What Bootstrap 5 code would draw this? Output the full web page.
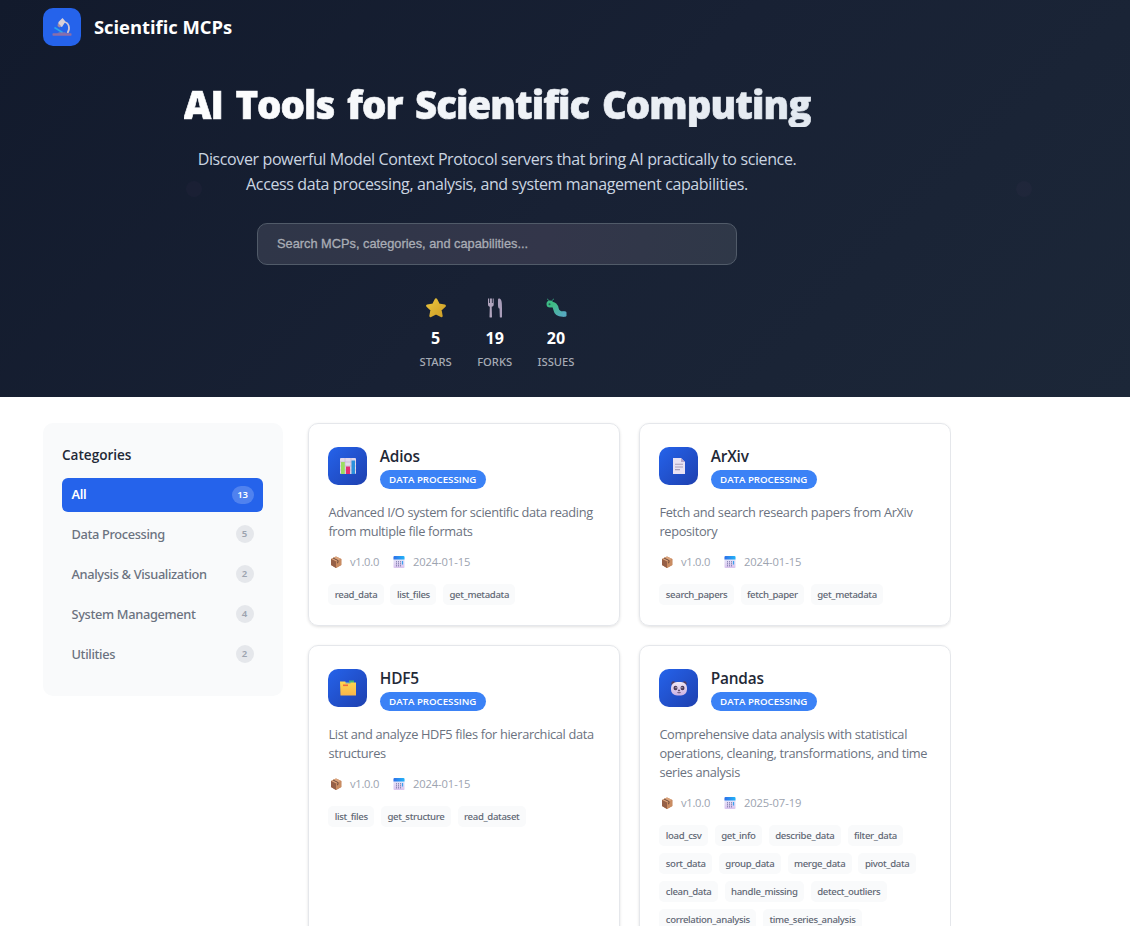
<!DOCTYPE html>
<html lang="en">
<head>
<meta charset="utf-8">
<meta name="viewport" content="width=device-width, initial-scale=1">
<title>Scientific MCPs</title>
<link href="https://cdn.jsdelivr.net/npm/bootstrap@5.3.0/dist/css/bootstrap.min.css" rel="stylesheet">
<style>
body{font-family:"Open Sans","Noto Sans",sans-serif;background:#fff;color:#1f2937;height:926px;overflow:hidden}
.wrap{width:908px;margin-left:43px}
.hero{height:397px;background:linear-gradient(135deg,#121a2c 0%,#182134 50%,#1c2738 100%);color:#fff;position:relative}
.hero .dot{position:absolute;width:16px;height:16px;border-radius:50%;background:rgba(99,70,120,.07);top:181px}
.topbar{height:54px;gap:13px}
.logo{width:38px;height:38px;border-radius:10px;background:#2563eb}
.brand{font-size:18.4px;font-weight:700;letter-spacing:-.03px}
h1{font-size:38.4px;font-weight:800;line-height:46px;margin:27px 0 0;letter-spacing:-.97px;word-spacing:3.6px;white-space:nowrap;background:linear-gradient(135deg,#fff,#e2e8f0);-webkit-background-clip:text;background-clip:text;color:transparent;-webkit-text-stroke:.7px transparent}
.intro{font-size:16px;line-height:25.4px;margin:20px 0 0;color:#cbd5e1;letter-spacing:-.38px;white-space:nowrap}
.search{width:480px;height:42px;margin-top:25px;border:1px solid #515b69;border-radius:10px;background:linear-gradient(100deg,#2f3648,#33364a 60%,#2f3848);padding:0 19px;font:500 12.8px/40px "Liberation Sans",sans-serif;color:#a9adb5;-webkit-text-stroke:.3px}
.search::placeholder{color:#a9adb5;opacity:1}
.search:focus{outline:0}
.stats{gap:25.4px;margin-top:32px}
.stats svg{width:22px;height:22px}
.stats b{font-size:16px;line-height:20px;margin-top:9px;font-weight:700;letter-spacing:0}
.stats span{font-family:"Noto Sans","Open Sans",sans-serif;font-size:11.2px;line-height:15px;margin-top:6px;color:#a6abb5;font-weight:500}
.main{padding-top:26px;gap:25px;height:529px;overflow:hidden}
.side{width:240px;height:273px;border-radius:10px;background:#f9fafb;padding:22px 20px 0 19px}
.side h2{font-size:13.6px;font-weight:600;line-height:20px;margin:0 0 13px;letter-spacing:-.02px}
.cat{height:34px;margin-bottom:5.8px;border-radius:6px;padding:0 9.5px;font-family:"Noto Sans","Open Sans",sans-serif;font-size:12.8px;font-weight:500;color:#6b7280;letter-spacing:-.34px}
.cat i{font-style:normal;font-size:9.6px;line-height:18px;height:18px;border-radius:9px;padding:0 5.4px;min-width:18px;text-align:center;background:#e5e7eb;color:#9ca3af;font-weight:600;letter-spacing:0;margin-top:-1px}
.cat.on{background:#2563eb;color:#fff;font-weight:600}
.cat.on i{background:rgba(255,255,255,.2);color:#fff}
.tiles{display:grid;grid-template-columns:312px 312px;gap:19px;grid-template-rows:203px 340px}
.tile{border:1px solid #e5e7eb;border-radius:10px;padding:23px 19px 0 19.4px;box-shadow:0 1px 3px rgba(0,0,0,.12)}
.glyph{width:38.4px;height:38px;border-radius:10px;background:linear-gradient(135deg,#2563eb,#1e40af)}
.glyph svg,.logo svg{width:20px;height:20px}
.tile .head{gap:13px}
.tile h3{font-size:15.4px;font-weight:600;line-height:19px;margin:0;letter-spacing:-.2px}
.pill{font-size:9.7px;font-weight:600;line-height:19px;height:19px;border-radius:10px;background:#3b82f6;color:#fff;padding:0 9.3px;margin-top:4px;letter-spacing:-.02px;width:max-content}
.tile p{font-size:12.8px;line-height:19.1px;margin:14px 0 0;color:#6b7280;letter-spacing:-.33px;white-space:nowrap}
.meta{font-size:11.2px;line-height:16px;margin-top:13px;color:#9ca3af;letter-spacing:-.1px}
.meta svg{width:14px;height:14px;margin-left:1px}
.meta .ver{margin:0 12.700px 0 6.500px;width:28.5px;white-space:nowrap;letter-spacing:-.25px}
.meta .date{margin-left:6.800px}
.tags{gap:6.8px;margin-top:13.600px}
.tags span{font-family:"Noto Sans","Open Sans",sans-serif;font-size:9.6px;line-height:21px;height:21.2px;padding:0 6.4px;border-radius:5px;background:#f9fafb;color:#5f6774;font-weight:500;letter-spacing:-.34px}
</style>
</head>
<body>
<svg width="0" height="0" class="position-absolute">
<defs>
<linearGradient id="gold" x2="1" y2="1"><stop stop-color="#e9c33c"/><stop offset="1" stop-color="#cf9f27"/></linearGradient>
<linearGradient id="worm" x2="1" y2="1"><stop stop-color="#3fbf80"/><stop offset="1" stop-color="#55a9bd"/></linearGradient>
<linearGradient id="folder" x2="0" y2="1"><stop stop-color="#ffd84f"/><stop offset="1" stop-color="#f9b54c"/></linearGradient>
<linearGradient id="sheet" x2="0" y2="1"><stop stop-color="#e8eefc"/><stop offset="1" stop-color="#d9c3ee"/></linearGradient>
<linearGradient id="calhead"><stop stop-color="#2f6fe8"/><stop offset="1" stop-color="#22b4f8"/></linearGradient>
<linearGradient id="face" x2="0" y2="1"><stop stop-color="#f1e8f3"/><stop offset="1" stop-color="#cbb0e2"/></linearGradient>
</defs>
<symbol id="scope" viewBox="0 0 20 20"><path d="M12 5c5 .5 6.500 6.500 3.500 11" fill="none" stroke="#d3c6d3" stroke-width="1.700"/><path d="M6.500 5l4-4 3 3.500-3.500 5.500-4-1.500z" fill="#d8cfd8"/><path d="M6 6l3 3-1.500 1.500L5.500 9z" fill="#a58b9f"/><path d="M2.500 10.500l8 5" stroke="#2aa5ee" stroke-width="1.600"/><path d="M7 15.500h6l2 1H5z" fill="#98849f"/><rect x=".5" y="16.300" width="19" height="2.400" rx=".6" fill="#8c6ea9"/></symbol>
<symbol id="star" viewBox="0 0 22 22"><path d="M11 2.600l2.700 5.200 5.900.9-4.300 4.200 1.100 6-5.400-2.800-5.400 2.800 1.100-6-4.300-4.200 5.900-.9z" fill="url(#gold)" stroke="url(#gold)" stroke-width="2.600" stroke-linejoin="round"/></symbol>
<symbol id="fork" viewBox="0 0 22 22"><path d="M4 1.500v6c0 1.500.8 2 1.800 2.300L5.500 20c0 .8 2.500.8 2.500 0L7.700 9.800C9 9.500 9.700 9 9.700 7.500v-6h-1v4.500h-.8v-4.500H5.800v4.500h-.8v-4.500z" fill="#b0a4bd"/><path d="M14 3c0-1.500 1-1.800 2-1.300 1.800 1 2 4 2 9.300V20c0 .8-2.200.8-2.200 0l-.3-8.500c-1.500 0-1.600-2-1.500-8.500z" fill="#a99db9"/></symbol>
<symbol id="bug" viewBox="0 0 22 22"><path d="M4.500 4L2 1.800M6.500 4L9 1.800" stroke="#348e75" fill="none" stroke-width="1"/><path d="M5.500 7.500c4.500-.5 5 2 5.500 4.500s2.500 5.500 8 5" fill="none" stroke="url(#worm)" stroke-width="5.600"/><rect x="17.500" y="14.200" width="4" height="5.600" rx="1.500" fill="#55a9bd"/><circle cx="5" cy="7" r="3.500" fill="#3dbb85"/><circle cx="4.500" cy="7.200" r="1" fill="#235b52"/></symbol>
<symbol id="chart" viewBox="0 0 20 20"><rect x="2" y="2" width="16" height="16" rx="1" fill="#e1d8ec"/><path d="M2 6h16M2 10h16M2 14h16M7 2v16M13 2v16" stroke="#bdb0d2" stroke-width=".6"/><path d="M3 6h3.800v12H3z" fill="#9bdc62"/><path d="M8 10.500h4V18H8z" fill="#e52d72"/><path d="M13.500 4.500H17V18h-3.500z" fill="#2b91dc"/></symbol>
<symbol id="doc" viewBox="0 0 20 20"><path d="M4 2h8l4 4v12H4z" fill="#e9e2f3"/><path d="M12 2v4h4z" fill="#b8a6c9"/><path d="M6 8.300h8M6 11h8M6 13.600h5" stroke="#aaa0b9" stroke-width="1.100"/></symbol>
<symbol id="files" viewBox="0 0 20 20"><path d="M11 2.500h5v3h-5z" fill="#43b577"/><path d="M2 3.500h5l1.500 1H18v13H2.500z" fill="url(#folder)"/><path d="M7.500 4.300h5v1h-5z" fill="#3b8be1"/><path d="M5 6.500h5v1.600H5z" fill="#f06a3f"/></symbol>
<symbol id="panda" viewBox="0 0 20 20"><circle cx="4.500" cy="5.500" r="2.200" fill="#554065"/><circle cx="15.500" cy="5.500" r="2.200" fill="#554065"/><rect x="2" y="4" width="16" height="13.500" rx="6" fill="url(#face)"/><ellipse cx="6.500" cy="10" rx="2" ry="2.300" fill="#4c3b5a"/><ellipse cx="13.500" cy="10" rx="2" ry="2.300" fill="#4c3b5a"/><circle cx="7" cy="9.700" r=".6" fill="#ddd"/><circle cx="13" cy="9.700" r=".6" fill="#ddd"/><path d="M9 12h2l-1 1.300zM8.200 14.500q1.800 1 3.600 0" fill="#4c3b5a" stroke="#4c3b5a" stroke-width=".5"/></symbol>
<symbol id="box" viewBox="0 0 14 14"><path d="M2 4l5-2.500L12.300 4v6L7 13 2 10z" fill="#b97a50"/><path d="M2 4l5-2.500L12.300 4 7 6.500z" fill="#dca47c"/><path d="M7 6.500L12.300 4v6L7 13z" fill="#c98c62"/><path d="M2 4l5 2.500V13L2 10z" fill="#966047"/><path d="M4 3l5 2.500v2L8 8" stroke="#6d4a3d" stroke-width="1" fill="none"/></symbol>
<symbol id="cal" viewBox="0 0 14 14"><rect x="1.500" y="1.500" width="11" height="11.500" rx="1" fill="url(#sheet)"/><path d="M1.500 4.500V2q0-1 1-1h9q1 0 1 1v2.500z" fill="url(#calhead)"/><path d="M4.500 6v6M6.500 6v6M8.500 6v6" stroke="#918bb8" stroke-width="1" stroke-dasharray="1.500 .5"/><path d="M10.500 6v3.500" stroke="#3aa1ef" stroke-width="1.200"/></symbol>
</svg>

<header class="hero">
  <span class="dot" style="left:186px"></span><span class="dot" style="left:1016px"></span>
  <div class="wrap">
    <div class="topbar d-flex align-items-center">
      <div class="logo d-flex align-items-center justify-content-center"><svg><use href="#scope"/></svg></div>
      <div class="brand">Scientific MCPs</div>
    </div>
    <div class="d-flex flex-column align-items-center text-center">
      <h1>AI Tools for Scientific Computing</h1>
      <p class="intro">Discover powerful Model Context Protocol servers that bring AI practically to science.<br>Access data processing, analysis, and system management capabilities.</p>
      <input class="search" type="text" placeholder="Search MCPs, categories, and capabilities..." aria-label="Search">
      <div class="stats d-flex">
        <div class="d-flex flex-column align-items-center"><svg><use href="#star"/></svg><b>5</b><span>STARS</span></div>
        <div class="d-flex flex-column align-items-center"><svg><use href="#fork"/></svg><b>19</b><span>FORKS</span></div>
        <div class="d-flex flex-column align-items-center"><svg><use href="#bug"/></svg><b>20</b><span>ISSUES</span></div>
      </div>
    </div>
  </div>
</header>

<main class="wrap main d-flex align-items-start">
  <aside class="side flex-shrink-0">
    <h2>Categories</h2>
    <div class="cat on d-flex align-items-center justify-content-between">All<i>13</i></div>
    <div class="cat d-flex align-items-center justify-content-between">Data Processing<i>5</i></div>
    <div class="cat d-flex align-items-center justify-content-between">Analysis &amp; Visualization<i>2</i></div>
    <div class="cat d-flex align-items-center justify-content-between">System Management<i>4</i></div>
    <div class="cat d-flex align-items-center justify-content-between">Utilities<i>2</i></div>
  </aside>
  <section class="tiles">
    <article class="tile">
      <div class="head d-flex"><div class="glyph d-flex align-items-center justify-content-center"><svg><use href="#chart"/></svg></div><div><h3>Adios</h3><div class="pill">DATA PROCESSING</div></div></div>
      <p>Advanced I/O system for scientific data reading<br>from multiple file formats</p>
      <div class="meta d-flex align-items-center"><svg><use href="#box"/></svg><span class="ver">v1.0.0</span><svg><use href="#cal"/></svg><span class="date">2024-01-15</span></div>
      <div class="tags d-flex flex-wrap"><span>read_data</span><span>list_files</span><span>get_metadata</span></div>
    </article>
    <article class="tile">
      <div class="head d-flex"><div class="glyph d-flex align-items-center justify-content-center"><svg><use href="#doc"/></svg></div><div><h3>ArXiv</h3><div class="pill">DATA PROCESSING</div></div></div>
      <p>Fetch and search research papers from ArXiv<br>repository</p>
      <div class="meta d-flex align-items-center"><svg><use href="#box"/></svg><span class="ver">v1.0.0</span><svg><use href="#cal"/></svg><span class="date">2024-01-15</span></div>
      <div class="tags d-flex flex-wrap"><span>search_papers</span><span>fetch_paper</span><span>get_metadata</span></div>
    </article>
    <article class="tile">
      <div class="head d-flex"><div class="glyph d-flex align-items-center justify-content-center"><svg><use href="#files"/></svg></div><div><h3>HDF5</h3><div class="pill">DATA PROCESSING</div></div></div>
      <p>List and analyze HDF5 files for hierarchical data<br>structures</p>
      <div class="meta d-flex align-items-center"><svg><use href="#box"/></svg><span class="ver">v1.0.0</span><svg><use href="#cal"/></svg><span class="date">2024-01-15</span></div>
      <div class="tags d-flex flex-wrap"><span>list_files</span><span>get_structure</span><span>read_dataset</span></div>
    </article>
    <article class="tile">
      <div class="head d-flex"><div class="glyph d-flex align-items-center justify-content-center"><svg><use href="#panda"/></svg></div><div><h3>Pandas</h3><div class="pill">DATA PROCESSING</div></div></div>
      <p>Comprehensive data analysis with statistical<br>operations, cleaning, transformations, and time<br>series analysis</p>
      <div class="meta d-flex align-items-center"><svg><use href="#box"/></svg><span class="ver">v1.0.0</span><svg><use href="#cal"/></svg><span class="date">2025-07-19</span></div>
      <div class="tags d-flex flex-wrap"><span>load_csv</span><span>get_info</span><span>describe_data</span><span>filter_data</span><span>sort_data</span><span>group_data</span><span>merge_data</span><span>pivot_data</span><span>clean_data</span><span>handle_missing</span><span>detect_outliers</span><span>correlation_analysis</span><span>time_series_analysis</span></div>
    </article>
  </section>
</main>
<script src="https://cdn.jsdelivr.net/npm/bootstrap@5.3.0/dist/js/bootstrap.bundle.min.js"></script>
</body>
</html>
